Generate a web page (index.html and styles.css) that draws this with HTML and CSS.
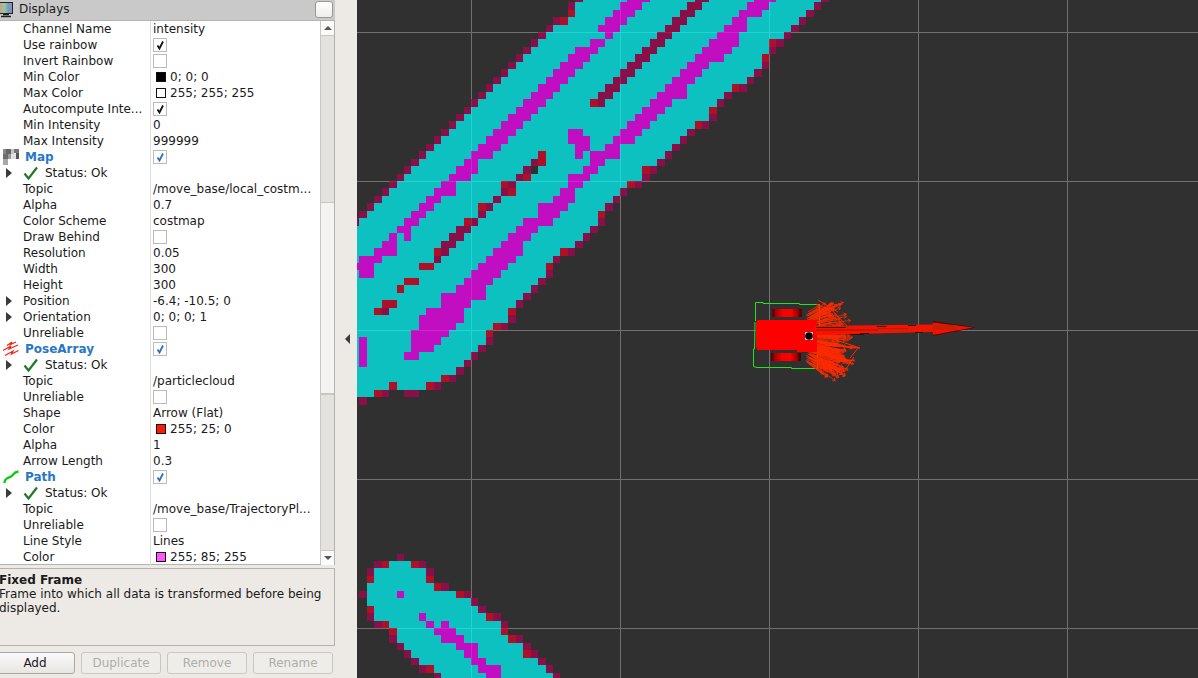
FILE: index.html
```html
<!DOCTYPE html>
<html lang="en">
<head>
<meta charset="utf-8">
<title>RViz</title>
<link rel="stylesheet" href="styles.css">
</head>
<body>
<div class="app">
  <aside class="dock">
    <header class="dock-title">
      <svg class="monitor" width="16" height="18" viewBox="0 0 16 18"><defs><linearGradient id="rb" x1="0" x2="1"><stop offset="0" stop-color="#e09090"/><stop offset=".4" stop-color="#90d090"/><stop offset=".7" stop-color="#8090d0"/><stop offset="1" stop-color="#70a0a0"/></linearGradient></defs><rect x="-1" y="2.500" width="13.500" height="11" fill="url(#rb)" stroke="#222" stroke-width="1"/><path d="M3 14.500h6M1 16.500h10" stroke="#222" stroke-width="1.500" fill="none"/></svg>
      <span class="dock-name">Displays</span>
      <span class="dock-btn"></span>
    </header>
    <div class="tree-wrap">
      <div class="tree">
        <div class="row"><span class="name">Channel Name</span><span class="val">intensity</span></div>
        <div class="row"><span class="name">Use rainbow</span><span class="val"><i class="box"><svg width="11" height="11" viewBox="0 0 11 11"><path d="M2.500 5.500l2 3 3.500-7" class="tick"/></svg></i></span></div>
        <div class="row"><span class="name">Invert Rainbow</span><span class="val"><i class="box"></i></span></div>
        <div class="row"><span class="name">Min Color</span><span class="val"><i class="swatch black"></i>0; 0; 0</span></div>
        <div class="row"><span class="name">Max Color</span><span class="val"><i class="swatch white"></i>255; 255; 255</span></div>
        <div class="row"><span class="name">Autocompute Inte...</span><span class="val"><i class="box"><svg width="11" height="11" viewBox="0 0 11 11"><path d="M2.500 5.500l2 3 3.500-7" class="tick"/></svg></i></span></div>
        <div class="row"><span class="name">Min Intensity</span><span class="val">0</span></div>
        <div class="row"><span class="name">Max Intensity</span><span class="val">999999</span></div>

        <div class="row"><span class="name top"><svg class="ticon" width="18" height="16" viewBox="0 0 18 16"><path fill="#8a8a8a" d="M0 0h3v5H0z"/><path fill="#666" d="M3 0h5v5H3z"/><path fill="#c4c4c4" d="M8 0h3v5H8z"/><path fill="#777" d="M11 0h5v4h-5z"/><path fill="#6e6e6e" d="M0 5h5v5H0z"/><path fill="#999" d="M5 5h3v5H5z"/><path fill="#e0e0e0" d="M8 5h5v5H8z"/><path fill="#555" d="M13 4h3v6h-3z"/><path fill="#a8a8a8" d="M0 10h5v6H0z"/></svg><b>Map</b></span><span class="val"><i class="box"><svg width="11" height="11" viewBox="0 0 11 11"><path d="M2.500 5.500l2 3 3.500-7" class="tick blue"/></svg></i></span></div>
        <div class="row"><span class="name status"><i class="tri"></i><svg class="okay" width="16" height="14" viewBox="0 0 16 14"><path d="M1.500 7.500l4 5L14 1.500" class="ok"/></svg>Status: Ok</span><span class="val"></span></div>
        <div class="row"><span class="name">Topic</span><span class="val">/move_base/local_costm...</span></div>
        <div class="row"><span class="name">Alpha</span><span class="val">0.7</span></div>
        <div class="row"><span class="name">Color Scheme</span><span class="val">costmap</span></div>
        <div class="row"><span class="name">Draw Behind</span><span class="val"><i class="box"></i></span></div>
        <div class="row"><span class="name">Resolution</span><span class="val">0.05</span></div>
        <div class="row"><span class="name">Width</span><span class="val">300</span></div>
        <div class="row"><span class="name">Height</span><span class="val">300</span></div>
        <div class="row"><span class="name sub"><i class="tri"></i>Position</span><span class="val">-6.4; -10.5; 0</span></div>
        <div class="row"><span class="name sub"><i class="tri"></i>Orientation</span><span class="val">0; 0; 0; 1</span></div>
        <div class="row"><span class="name">Unreliable</span><span class="val"><i class="box"></i></span></div>

        <div class="row"><span class="name top"><svg class="ticon" width="18" height="16" viewBox="0 0 18 16"><path d="M4 4.500L9 1 7.500 3.500 13 1M0 9.500L8 5 6 8l9-4M2 14.500L10 10 8.500 13l7-3.500" fill="none" stroke="#ea2a1e" stroke-width="1.300"/></svg><b>PoseArray</b></span><span class="val"><i class="box"><svg width="11" height="11" viewBox="0 0 11 11"><path d="M2.500 5.500l2 3 3.500-7" class="tick blue"/></svg></i></span></div>
        <div class="row"><span class="name status"><i class="tri"></i><svg class="okay" width="16" height="14" viewBox="0 0 16 14"><path d="M1.500 7.500l4 5L14 1.500" class="ok"/></svg>Status: Ok</span><span class="val"></span></div>
        <div class="row"><span class="name">Topic</span><span class="val">/particlecloud</span></div>
        <div class="row"><span class="name">Unreliable</span><span class="val"><i class="box"></i></span></div>
        <div class="row"><span class="name">Shape</span><span class="val">Arrow (Flat)</span></div>
        <div class="row"><span class="name">Color</span><span class="val"><i class="swatch red"></i>255; 25; 0</span></div>
        <div class="row"><span class="name">Alpha</span><span class="val">1</span></div>
        <div class="row"><span class="name">Arrow Length</span><span class="val">0.3</span></div>

        <div class="row"><span class="name top"><svg class="ticon" width="18" height="16" viewBox="0 0 18 16"><path d="M1.500 14c0-5 3.500-5 6.500-6.500S10 3 15.500 2.500" fill="none" stroke="#12c812" stroke-width="2.400"/></svg><b>Path</b></span><span class="val"><i class="box"><svg width="11" height="11" viewBox="0 0 11 11"><path d="M2.500 5.500l2 3 3.500-7" class="tick blue"/></svg></i></span></div>
        <div class="row"><span class="name status"><i class="tri"></i><svg class="okay" width="16" height="14" viewBox="0 0 16 14"><path d="M1.500 7.500l4 5L14 1.500" class="ok"/></svg>Status: Ok</span><span class="val"></span></div>
        <div class="row"><span class="name">Topic</span><span class="val">/move_base/TrajectoryPl...</span></div>
        <div class="row"><span class="name">Unreliable</span><span class="val"><i class="box"></i></span></div>
        <div class="row"><span class="name">Line Style</span><span class="val">Lines</span></div>
        <div class="row"><span class="name">Color</span><span class="val"><i class="swatch magenta"></i>255; 85; 255</span></div>
      </div>
      <div class="scroll">
        <div class="sb-btn"><i class="sb-up"></i></div>
        <div class="sb-track"></div>
        <div class="sb-thumb"></div>
        <div class="sb-track last"></div>
        <div class="sb-btn"><i class="sb-down"></i></div>
      </div>
    </div>
    <section class="help">
      <h4>Fixed Frame</h4>
      <p>Frame into which all data is transformed before being displayed.</p>
    </section>
    <div class="buttons">
      <button class="btn first">Add</button>
      <button class="btn off">Duplicate</button>
      <button class="btn off">Remove</button>
      <button class="btn off">Rename</button>
    </div>
  </aside>
  <div class="splitter"><i class="split-arrow"></i></div>
  <canvas id="view" width="841" height="678"></canvas>
</div>
<script src="main.js"></script>
</body>
</html>
```
FILE: styles.css
```css
* { box-sizing: border-box; }
html, body { margin: 0; height: 100%; overflow: hidden; }
body { font: 12px/16px "DejaVu Sans", sans-serif; color: #1a1a1a; background: #edeae6; }
.app { display: flex; width: 1198px; height: 678px; }
.dock { width: 335px; flex: none; display: flex; flex-direction: column; }
.dock-title { height: 21px; flex: none; display: flex; align-items: center; padding-bottom: 2px; background: #c9c9c9; border-bottom: 1px solid #b5b3b0; }
.monitor { flex: none; width: 16px; margin: 0 3px 0 0; }
.dock-name { flex: 1; }
.dock-btn { width: 18px; height: 17px; margin-right: 2px; margin-top: 1px; border: 1px solid #9a9895; border-radius: 3px; background: linear-gradient(#fff, #efedea); }
.tree-wrap { height: 544px; flex: none; display: flex; border-right: 1px solid #b5b3b0; border-bottom: 1px solid #b5b3b0; background: #fff; }
.tree { width: 320px; flex: none; }
.row { height: 16px; display: flex; white-space: nowrap; }
.name { width: 151px; flex: none; display: flex; align-items: center; padding-left: 23px; border-right: 1px solid #dcdcdc; }
.name.top { padding-left: 3px; }
.name.top b { color: #2a76c6; margin-left: 4px; }
.name.status { padding-left: 6px; }
.name.sub { padding-left: 6px; }
.name.sub .tri { margin-right: 11px; }
.ticon { flex: none; }
.okay { flex: none; margin: 0 6px 0 0; }
.tri { flex: none; width: 0; height: 0; margin-right: 11px; border-left: 6px solid #3c3c3c; border-top: 5px solid transparent; border-bottom: 5px solid transparent; }
.val { flex: 1; display: flex; align-items: center; padding-left: 2px; min-width: 0; }
.box { width: 14px; height: 14px; flex: none; display: flex; align-items: center; justify-content: center; border: 1px solid #bdbbb8; background: #fff; }
.tick { fill: none; stroke: #111; stroke-width: 1.800; }
.tick.blue { stroke: #2a6fc4; }
.ok { fill: none; stroke: #1f7a28; stroke-width: 2.200; }
.swatch { width: 10px; height: 10px; flex: none; margin: 0 4px 0 3px; border: 1px solid #111; }
.black { background: #000; }
.white { background: #fff; }
.red { background: #ff1900; }
.magenta { background: #ff55ff; }
.scroll { width: 14px; flex: none; display: flex; flex-direction: column; border-left: 1px solid #c9c7c4; }
.sb-btn { height: 14px; flex: none; display: flex; align-items: center; justify-content: center; background: #fbfbfa; }
.sb-up { width: 0; height: 0; border: 4px solid transparent; border-top: 0; border-bottom: 4px solid #555; }
.sb-down { width: 0; height: 0; border: 4px solid transparent; border-bottom: 0; border-top: 4px solid #555; }
.sb-track { height: 167px; flex: none; background: #e4e2df; border-top: 1px solid #c9c7c4; }
.sb-track.last { height: 157px; border-bottom: 1px solid #c9c7c4; }
.sb-thumb { height: 192px; flex: none; background: #f4f3f1; border-top: 1px solid #c9c7c4; border-bottom: 1px solid #c9c7c4; }
.help { height: 78px; flex: none; margin-top: 3px; padding: 4px 4px 0 0; border: 1px solid #b5b3b0; border-left: 0; line-height: 14px; }
.help h4 { margin: 0 0 0 -1px; font-size: 12px; line-height: 14px; font-weight: bold; }
.help p { margin: 0 0 0 -1px; }
.buttons { display: flex; gap: 6px; padding: 6px 2px 0 0; margin-left: -5px; }
.btn { width: 80px; height: 22px; font: 12px "DejaVu Sans", sans-serif; color: #1a1a1a; padding: 0; background: linear-gradient(#fbfafa, #e8e6e3); border: 1px solid #a9a7a4; border-radius: 3px; }
.btn.off { color: #b0aeab; background: #efedea; border-color: #c9c7c4; }
.splitter { width: 22px; flex: none; display: flex; align-items: center; justify-content: center; padding-bottom: 1px; padding-left: 2px; }
.split-arrow { width: 0; height: 0; border-right: 5px solid #3c3c3c; border-top: 5px solid transparent; border-bottom: 5px solid transparent; }
#view { display: block; flex: none; width: 841px; height: 678px; }
```
FILE: main.js
```js
(function () {
var c = document.getElementById('view').getContext('2d');
var CELL = 7.45, OX = 471, OY = 32;
var TEAL = 'rgba(0,255,255,.7)', PUR = 'rgba(255,0,255,.7)', MAR = 'rgba(177,0,83,.7)', RED = 'rgba(231,2,37,.7)';
function kx(v) { return Math.round((v - OX) / CELL); }
function ky(v) { return Math.floor((v + 1 - OY) / CELL); }
function px(k, o) { return Math.round(o + k * CELL); }
function cells(y, x0, x1, col) {
  var r = ky(y), a = px(kx(x0), OX), b = px(kx(x1), OX);
  var t = px(r, OY), d = px(r + 1, OY);
  c.fillStyle = col;
  c.fillRect(a, t, b - a, d - t);
}
c.translate(-357, 0);
c.fillStyle = '#303030';
c.fillRect(357, 0, 841, 678);
c.fillStyle = '#707070';
[471, 620, 769, 918, 1067].forEach(function (x) { c.fillRect(x, 0, 1, 678); });
[32, 181, 330, 479, 628].forEach(function (y) { c.fillRect(357, y, 841, 1); });

function paintRow(y, l, r, kind, lkind, p) {
  var br = kx(r);
  var list = p.filter(function (q) { return ky(q[0]) === ky(y); }).sort(function (a, b) { return a[1] - b[1]; });
  var cur = l;
  list.forEach(function (q) {
    if (kx(q[1]) > kx(cur)) cells(y, cur, q[1], TEAL);
    cells(y, q[1], q[2], q[3]);
    cur = q[2];
  });
  if (kx(cur) < br) cells(y, cur, r, TEAL);
  var w = CELL;
  if (lkind === 'r') cells(y, l - w, l, RED);
  else if (lkind === 'rm') { cells(y, l - w, l, RED); cells(y, l - 2 * w, l - w, MAR); }
  else if (lkind !== 'n') cells(y, l - w, l, MAR);
  if (kind === 'm') cells(y, r, r + w, MAR);
  else if (kind === 'r') cells(y, r, r + w, RED);
  else if (kind === 'rm') { cells(y, r, r + w, RED); cells(y, r + w, r + 2 * w, MAR); }
}

var inner = [];
function add(col, list) { list.forEach(function (q) { inner.push([q[0], q[1], q[2], col]); }); }
add(PUR, [
  [-5,628,650],[2,620,643],[10,613,635],[17,605,628],[25,598,620],[32,605,613],[39,590,605],[47,575,598],
  [54,568,590],[62,561,583],[69,553,575],[77,546,568],[84,538,561],[92,531,553],[99,523,546],[106,516,538],
  [114,508,531],[121,501,523],[129,493,516],[136,486,508],[144,478,501],[151,471,493],[159,464,478],[166,456,478],
  [174,449,471],[181,441,456],[188,434,456],[196,426,441],[203,419,434],[211,411,426],[218,404,419],[226,396,411],
  [233,389,396],[233,404,411],[240,381,396],[248,374,396],[255,359,381],[263,352,374],[270,359,374],
  [337,359,367],[345,359,367],[352,359,367],[360,359,367],
  [-5,754,777],[2,747,769],[10,740,762],[17,732,747],[25,725,747],[32,717,740],[39,710,740],[47,702,732],
  [54,695,725],[62,687,710],[69,680,702],[77,672,695],[84,665,687],[92,657,687],[99,650,672],[106,643,665],
  [114,635,657],[121,628,650],[129,620,643],[136,613,635],[144,605,620],[151,590,620],[159,590,605],[166,583,598],
  [174,568,590],[181,568,583],[188,561,575],[196,553,575],[203,538,568],[211,538,560],[218,523,553],[226,516,538],
  [233,508,531],[240,501,523],[248,493,523],[255,486,516],[263,478,508],[270,471,501],[278,464,493],[285,456,486],
  [293,441,486],[300,441,471],[308,426,464],[315,419,464],[323,419,456],[330,411,449],[337,411,441],[345,411,434],[352,404,419],
  [129,568,583],[136,568,590],[144,575,590],[151,575,583]
]);
add(MAR, [
  [-5,695,710],[2,687,702],[10,680,695],[17,672,687],[25,665,680],[32,657,672],[39,650,665],[47,643,657],[54,635,650],
  [62,628,643],[69,620,635],[77,613,628],[84,605,620],[92,598,613],[99,598,605],
  [159,531,538],[166,523,531],[174,516,523],[181,508,516],[188,501,508],[196,493,501],[203,486,493],[211,478,486],
  [218,471,478],[226,456,471],[233,449,464],[240,441,456],[248,441,449],[256,434,441],[308,381,389]
]);
add(RED, [
  [99,590,598],[151,538,546],[159,538,546],[174,523,531],[181,501,508],[188,508,516],[203,478,486],[218,464,471],
  [248,434,441],[263,419,434],[278,404,419],[285,396,404],[300,381,396],[308,374,381],[382,389,396]
]);
add('rgba(0,0,0,0)', [[166,531,538]]);

var upper = [
  [-5,583,822,'m'],[2,575,814,'m'],[10,575,807,'m','r'],[17,568,799,'m','rm'],[25,553,792,'m'],[32,546,784,'m'],
  [39,538,769,'rm'],[47,531,769,'m'],[54,523,762,'r'],[62,516,762,'m'],[69,508,754,'m'],[77,501,747,'m'],
  [84,493,732,'rm'],[92,486,725,'m'],[99,478,717,'m'],[106,471,710,'r'],[114,464,710,'m'],[121,456,695,'rm'],
  [129,449,687,'m'],[136,441,680,'m'],[144,434,672,'m'],[151,426,665,'m'],[159,419,657,'m'],[166,411,643,'rm'],
  [174,404,643,'m'],[181,396,628,'rm'],[188,389,620,'m'],[196,381,613,'m'],[203,374,605,'m'],[211,367,598,'r'],
  [218,359,598,'m'],[226,344,590,'m'],[233,344,583,'m'],[240,344,575,'m'],[248,344,561,'rm'],[255,344,553,'m'],
  [263,344,546,'r'],[270,344,546,'m'],[278,344,538,'m'],[285,344,531,'m'],[293,344,523,'m'],[300,344,516,'m'],
  [308,344,508,'r'],[315,344,508,'m'],[323,344,493,'rm'],[330,344,486,'r'],[337,344,486,'m'],[345,344,478,'m'],
  [352,344,471,'m'],[360,344,464,'m'],[367,344,456,'m'],[375,344,441,'rm'],[382,344,426,'rm'],[390,344,374,'rm']
];
var lower = [
  [561,389,411,'rm','rm'],[568,374,426,'m'],[576,374,426,'r','r'],[583,367,433,'rm','n'],[591,367,456,'rm'],
  [598,367,471,'m','n'],[606,374,478,'m','r'],[613,374,486,'rm'],[621,389,501,'m','rm'],[628,396,501,'r','r'],
  [636,396,508,'rm'],[643,404,523,'m'],[651,411,523,'rm'],[658,419,538,'m'],[665,433,546,'m','rm'],[673,441,553,'m']
];
add(PUR, [[591,396,404],[613,419,426],[621,426,433],[621,441,449],[628,433,456],[636,441,463],[643,456,478],
  [651,463,478],[658,471,486],[665,478,501],[673,486,501]]);

c.save();
c.beginPath(); c.rect(357, 0, 841, 678); c.clip();
upper.concat(lower).forEach(function (t) {
  var row = inner.filter(function (q) { return q[1] >= t[1] - 1 && q[2] <= t[2] + 1; });
  paintRow(t[0], t[1], t[2], t[3], t[4], row);
});
cells(397, 359, 367, MAR);
cells(390, 404, 419, MAR);
cells(553, 396, 404, MAR);
c.restore();

function stroke(pts) {
  c.beginPath();
  pts.forEach(function (p, i) { if (i) c.lineTo(p[0], p[1]); else c.moveTo(p[0], p[1]); });
  c.stroke();
}
function poly(col, pts) {
  c.fillStyle = col;
  c.beginPath();
  pts.forEach(function (p, i) { if (i) c.lineTo(p[0], p[1]); else c.moveTo(p[0], p[1]); });
  c.closePath(); c.fill();
}
// robot footprint
c.strokeStyle = '#22e41a'; c.lineWidth = 1;
stroke([[755.5,321],[755.5,302.5],[763,302.5],[763,303.5],[799.5,303.5],[799.5,304.5],[819.5,304.5],[819.5,325]]);
stroke([[755,322],[754.5,349],[753.5,349],[753.5,366.5],[757,367.5],[791.5,367.5],[791.5,368.5],[817.5,368.5],[817.5,350]]);

// wheels
function wheel(x, y, w, h) {
  var g = c.createLinearGradient(x, 0, x + w, 0);
  g.addColorStop(0, '#600000'); g.addColorStop(.1, '#7a0000'); g.addColorStop(.12, '#a80000'); g.addColorStop(.3, '#d80000');
  g.addColorStop(.34, '#f60000'); g.addColorStop(.66, '#ff0000'); g.addColorStop(.7, '#d80000'); g.addColorStop(.88, '#a00000'); g.addColorStop(.9, '#600000'); g.addColorStop(1, '#500000');
  c.fillStyle = g; c.fillRect(x, y, w, h);
}
wheel(772, 309, 30, 8);
wheel(771, 353, 30, 8);

// particles: thin flat arrows fanning out in front of the robot
var seed = 7;
function rnd() { seed = (seed * 16807) % 2147483647; return seed / 2147483647; }
c.strokeStyle = '#ff2a00'; c.lineWidth = 0.8;
for (var i = 0; i < 190; i++) {
  var sy = 312 + rnd() * 52, sx = 806 + rnd() * 14;
  var d = (sy - 336) / 26 + (rnd() - .5) * .5;
  var ang = d * .55, reach = 40 - Math.abs(d) * 12 + (d > 0 ? d * 6 : 0);
  var len = reach * (.45 + rnd() * .55);
  var ex = sx + Math.cos(ang) * len, ey = sy + Math.sin(ang) * len;
  stroke([[sx, sy], [ex, ey]]);
  stroke([[ex - Math.cos(ang - .6) * 3, ey - Math.sin(ang - .6) * 3], [ex, ey], [ex - Math.cos(ang + .6) * 3, ey - Math.sin(ang + .6) * 3]]);
}
c.lineWidth = 1;
[[818,300,838,312],[816,304,830,310],[828,306,848,327],[820,368,846,369],[822,362,855,360],[825,345,860,348],[830,338,860,348],[835,358,855,361],[846,369,854,357],[858,348,850,358]].forEach(function (l) {
  stroke([[l[0], l[1]], [l[2], l[3]]]);
});

// body
c.fillStyle = '#ff0000';
c.fillRect(757, 320, 60, 30);
c.fillRect(797, 350, 20, 2);
c.fillRect(756, 322, 2, 26);

// main arrow
poly('#f81000', [[815,326],[933,324.5],[933,332],[815,335]]);
c.fillStyle = '#b81c00';
c.fillRect(816, 329, 62, 2);
c.fillRect(878, 328, 30, 1);
c.fillStyle = '#d82000';
c.fillRect(878, 329, 55, 2);
c.fillStyle = '#301000';
[[816,327,30,1],[850,334,14,1],[877,326,9,1],[908,325,8,1],[860,333,9,1],[915,332,8,1]].forEach(function (r) { c.fillRect(r[0], r[1], r[2], r[3]); });
poly('#4a0a00', [[933,321],[976,327.5],[933,336]]);
poly('#f41000', [[933,322.5],[973,327.5],[933,335]]);
c.fillStyle = '#c42000';
c.fillRect(933, 325, 24, 5);

// base marker
c.fillStyle = '#d8d0d0'; c.fillRect(805, 332, 8, 8);
c.fillStyle = '#000'; c.beginPath(); c.arc(809, 336, 3.8, 0, 7); c.fill();
})();
```
